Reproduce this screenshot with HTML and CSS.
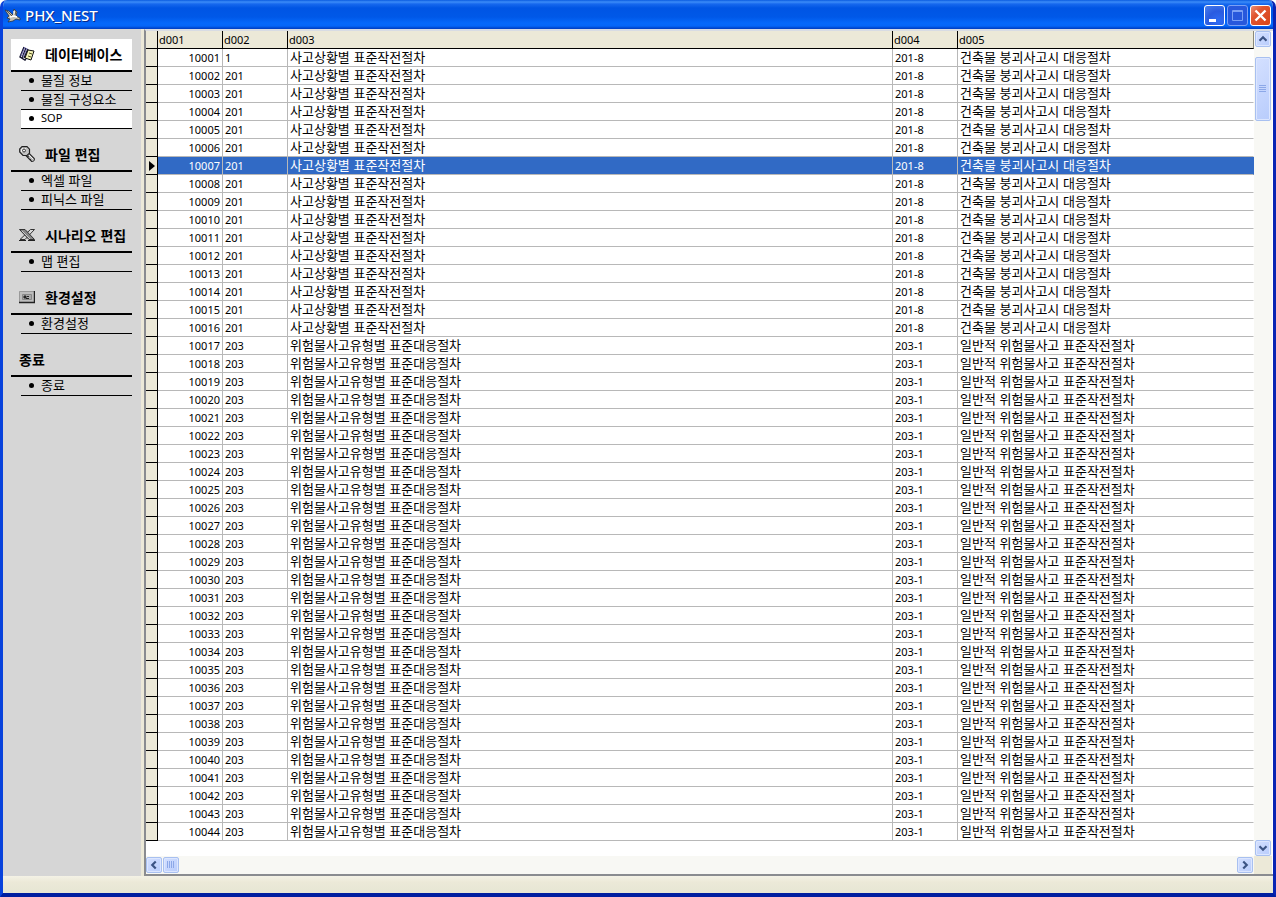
FILE: index.html
```html
<!DOCTYPE html>
<html lang="ko">
<head>
<meta charset="utf-8">
<title>PHX_NEST</title>
<link rel="stylesheet" href="styles.css">
</head>
<body>
<div class="window">
  <header class="titlebar">
    <svg class="app-icon" viewBox="0 0 16 16" aria-hidden="true">
      <path d="M0 3l4 1 4 4 1-6 3 3-1 4 4 2v2l-4-1-3 2-5 1 2-3-3-1 2-2z" fill="#c4c1b4" stroke="#2c3440" stroke-width=".8"/>
      <path d="M5 10l4-1 3 1M9 4v4" stroke="#fff" stroke-width="1.400" fill="none"/>
      <path d="M2 4l5 5M11 4l-1 4" stroke="#5c574a" fill="none"/>
    </svg>
    <h1 class="title">PHX_NEST</h1>
    <div class="window-buttons">
      <button class="win-btn" aria-label="최소화"><svg viewBox="0 0 21 21"><path d="M5 14h7v3H5z" fill="#fff"/></svg></button>
      <button class="win-btn win-btn-off" aria-label="최대화" disabled><svg viewBox="0 0 21 21"><path d="M5.500 5.500h10v10h-10zM5 6.500h11" fill="none" stroke="#7ba0f5"/></svg></button>
      <button class="win-btn win-btn-close" aria-label="닫기"><svg viewBox="0 0 21 21"><path d="M5.500 5.500l10 10M15.500 5.500l-10 10" stroke="#fff" stroke-width="2.400"/></svg></button>
    </div>
  </header>

  <div class="content">
    <nav class="sidebar">
      <section class="group">
        <h2 class="group-title group-title-active">
          <svg class="group-icon" viewBox="0 0 16 16" aria-hidden="true">
            <path d="M5 1L1 11l5 3 1-1M7 2L3 12M9 3L5 12" fill="none" stroke="#15152e" stroke-width="1.400"/>
            <path d="M6 1L2 10M8 2L4 11" stroke="#7470b4" fill="none"/>
            <path d="M9 4l6 1-3 9-6-2z" fill="#f4f2b4" stroke="#111"/>
            <path d="M10 7l3 1M9 10l3 1" stroke="#55551c"/>
          </svg>
          <span>데이터베이스</span>
        </h2>
        <ul class="items">
          <li><a class="item" href="#">물질 정보</a></li>
          <li><a class="item" href="#">물질 구성요소</a></li>
          <li><a class="item item-active item-latin" href="#" aria-current="page">SOP</a></li>
        </ul>
      </section>
      <section class="group">
        <h2 class="group-title">
          <svg class="group-icon" viewBox="0 0 16 16" aria-hidden="true">
            <path d="M8 8l7 7" stroke="#222" stroke-width="5"/>
            <path d="M8 8l6.500 6.500" stroke="#b4b4b4" stroke-width="2.600"/>
            <path d="M9 8l5 5" stroke="#f4f4f4"/>
            <path d="M8 11l2-1M11 14l1-1" stroke="#222"/>
            <path d="M3 .700h5l2.500 2.500v4L8 9.500H4L.700 6V3z" fill="#c4c4c4" stroke="#222" stroke-width="1.200"/>
            <path d="M3 3h4M3 3v3" stroke="#fff" stroke-width="1.500"/>
            <circle cx="5" cy="4.500" r="1.500" fill="#eee" stroke="#333"/>
          </svg>
          <span>파일 편집</span>
        </h2>
        <ul class="items">
          <li><a class="item" href="#">엑셀 파일</a></li>
          <li><a class="item" href="#">피닉스 파일</a></li>
        </ul>
      </section>
      <section class="group">
        <h2 class="group-title">
          <svg class="group-icon" viewBox="0 0 16 16" aria-hidden="true">
            <path d="M15.500 2.500h-4L1 12.500h5z" fill="#d8d8d8" stroke="#333"/>
            <path d="M.500 2.500H6l9.500 10H10z" fill="#888" stroke="#333"/>
            <path d="M3 4l8 8" stroke="#ccc"/>
            <path d="M0 13.500h7M9 13.500h7" stroke="#222"/>
          </svg>
          <span>시나리오 편집</span>
        </h2>
        <ul class="items">
          <li><a class="item" href="#">맵 편집</a></li>
        </ul>
      </section>
      <section class="group">
        <h2 class="group-title">
          <svg class="group-icon" viewBox="0 0 16 16" aria-hidden="true">
            <path d="M0 2h16v12H0z" fill="#bdbdbd"/>
            <path d="M.5 14V2.500H15" fill="none" stroke="#999"/>
            <path d="M15.500 2v11.500H0" fill="none" stroke="#222" stroke-width="1.400"/>
            <path d="M3.500 5.500h9v5h-9z" fill="#aaa" stroke="#888"/>
            <path d="M5 7h2v2H5zM8 7.500h2M7 9.500h3" fill="#222" stroke="#222"/>
          </svg>
          <span>환경설정</span>
        </h2>
        <ul class="items">
          <li><a class="item" href="#">환경설정</a></li>
        </ul>
      </section>
      <section class="group">
        <h2 class="group-title">종료</h2>
        <ul class="items">
          <li><a class="item" href="#">종료</a></li>
        </ul>
      </section>
    </nav>

    <main class="grid-panel">
      <div class="grid-view">
        <table class="grid">
          <colgroup>
            <col class="col-mark"><col class="col-code"><col class="col-code"><col class="col-name"><col class="col-code"><col class="col-desc">
          </colgroup>
          <thead>
            <tr><th class="mark"></th><th>d001</th><th>d002</th><th>d003</th><th>d004</th><th>d005</th></tr>
          </thead>
          <tbody id="rows"></tbody>
        </table>
      </div>
      <div class="vscroll">
        <button class="scroll-btn" aria-label="위로"><svg viewBox="0 0 16 16"><path d="M4 10l4-4 4 4"/></svg></button>
        <div class="thumb thumb-v"><svg viewBox="0 0 8 8"><path d="M0 .5h7M0 2.500h7M0 4.500h7M0 6.500h7"/></svg></div>
        <button class="scroll-btn scroll-end" aria-label="아래로"><svg viewBox="0 0 16 16"><path d="M4 6l4 4 4-4"/></svg></button>
      </div>
      <div class="hscroll">
        <button class="scroll-btn" aria-label="왼쪽으로"><svg viewBox="0 0 16 16"><path d="M10 4L6 8l4 4"/></svg></button>
        <div class="thumb thumb-h"><svg viewBox="0 0 8 8"><path d="M.5 0v7M2.500 0v7M4.500 0v7M6.500 0v7"/></svg></div>
        <button class="scroll-btn scroll-end" aria-label="오른쪽으로"><svg viewBox="0 0 16 16"><path d="M6 4l4 4-4 4"/></svg></button>
      </div>
      <div class="corner"></div>
    </main>
  </div>
  <footer class="statusbar"></footer>
</div>
<script src="rows.js"></script>
</body>
</html>
```
FILE: rows.js
```js
const groups = [
  { from: 10001, to: 10016, code: "201", name: "사고상황별 표준작전절차", sub: "201-8", desc: "건축물 붕괴사고시 대응절차" },
  { from: 10017, to: 10044, code: "203", name: "위험물사고유형별 표준대응절차", sub: "203-1", desc: "일반적 위험물사고 표준작전절차" }
];
const selectedId = 10007;
const body = document.getElementById("rows");

for (const g of groups) {
  for (let id = g.from; id <= g.to; id++) {
    const row = body.insertRow();
    if (id === selectedId) row.className = "selected";
    row.insertCell().className = "mark";
    const values = [
      [id, "num"],
      [id === 10001 ? "1" : g.code, ""],
      [g.name, "ko"],
      [g.sub, ""],
      [g.desc, "ko"]
    ];
    for (const [text, cls] of values) {
      const cell = row.insertCell();
      cell.textContent = text;
      if (cls) cell.className = cls;
    }
  }
}
```
FILE: styles.css
```css
* { box-sizing: border-box; }

body {
  margin: 0;
  background: #fff;
  color: #000;
  font: 11px "Noto Sans", "Noto Sans CJK KR", sans-serif;
}

button { padding: 0; font: inherit; }
svg { display: block; }

.window {
  height: 100vh;
  display: flex;
  flex-direction: column;
  border: solid #0831d9;
  border-width: 0 3px 4px;
  border-color: #0831d9 #0a24b4 #001ea0 #0842dc;
  border-radius: 7px 7px 0 0;
  overflow: hidden;
  background: #ece9d8;
}

.titlebar {
  flex: none;
  height: 29px;
  margin: 0 -3px;
  padding: 1px 5px 0;
  display: flex;
  align-items: center;
  gap: 4px;
  background: linear-gradient(#0a5be0 0, #3c8cf8 2px, #1668ee 4px, #0055e4 8px, #0058e8 17px, #0568fa 23px, #0566f8 26px, #0048d0 28px, #003cc0 29px);
}
.app-icon { width: 16px; height: 16px; }
.title {
  flex: 1;
  margin: 0;
  color: #fff;
  font: 500 15px/20px "Noto Sans", sans-serif;
  text-shadow: 1px 1px #0a2a88;
}
.window-buttons { display: flex; gap: 2px; }
.win-btn {
  width: 21px;
  height: 21px;
  border: 1px solid #fff;
  border-radius: 3px;
  background: radial-gradient(circle at 70% 80%, #2f6cf4, #2a5be0 50%, #4a80ec);
}
.win-btn svg { width: 21px; height: 21px; margin: -1px; }
.win-btn-off { border-color: #7ba0f5; background: #2858dc; }
.win-btn-close { background: linear-gradient(135deg, #ec9078, #e05530 35%, #d84418); }

.content { flex: 1; min-height: 0; display: flex; }

.sidebar {
  flex: none;
  width: 138px;
  padding: 10px 9px 0 8px;
  display: flex;
  flex-direction: column;
  gap: 10px;
  background: #d6d6d6;
}
.group-title {
  height: 33px;
  margin: 0;
  padding: 0 0 2px 8px;
  display: flex;
  align-items: center;
  gap: 10px;
  border-bottom: 2px solid #000;
  font: bold 14px/20px "Noto Sans CJK KR", sans-serif;
  white-space: nowrap;
}
.group-title-active { background: #fff; }
.group-icon { width: 16px; height: 16px; }
.items { margin: 0; padding: 0 0 0 10px; list-style: none; }
.item {
  height: 19px;
  padding: 0 0 2px 8px;
  display: flex;
  align-items: center;
  gap: 7px;
  border-bottom: 1px solid #000;
  color: #000;
  font: 13px/16px "Noto Sans CJK KR", sans-serif;
  text-decoration: none;
}
.item::before { content: ""; width: 5px; height: 5px; border-radius: 50%; background: #000; }
.item-latin { font: 11px/16px "Noto Sans", sans-serif; }
.item-active { background: #fff; }

.grid-panel {
  flex: 1;
  min-width: 0;
  margin-left: 3px;
  padding-right: 1px;
  display: grid;
  grid-template: 1fr 18px / 1fr 18px;
  border: 2px solid #8a8c90;
  border-top-color: #d8dce4;
  border-right: 0;
  background: #fff;
}
.grid-view { overflow: hidden; }

.grid {
  width: 100%;
  table-layout: fixed;
  border-collapse: separate;
  border-spacing: 0;
}
.col-mark { width: 12px; }
.col-code { width: 65px; }
.col-name { width: 605px; }
.grid th, .grid td {
  height: 18px;
  padding: 0 2px;
  border: solid #b8b8b8;
  border-width: 0 1px 1px 0;
  font-size: 11px;
  line-height: 17px;
  text-align: left;
  white-space: nowrap;
}
.grid th { font-weight: 400; padding: 0 1px; background: #ece9d8; border-color: #000; }
.grid .ko { font: 13px/15px "Noto Sans CJK KR", sans-serif; vertical-align: top; }
.grid .num { text-align: right; }
.grid .mark { padding: 0 0 0 3px; background: #ece9d8; border-color: #000; }
.grid td:last-child { border-right-color: #fff; }
.grid th:last-child { border-right-color: #8a8878; }
.selected td { background: #316ac5; color: #fff; }
.grid .selected td:last-child { border-right-color: #316ac5; }
.selected .mark::before {
  content: "";
  display: block;
  width: 0;
  border: solid transparent;
  border-width: 5px 0 5px 6px;
  border-left-color: #000;
}

.vscroll, .hscroll { display: flex; background: #f8f8f4; }
.vscroll { flex-direction: column; align-items: center; }
.hscroll { align-items: center; gap: 1px; }
.corner { background: #ece9d8; }
.scroll-btn, .thumb {
  flex: none;
  width: 16px;
  height: 16px;
  border: 1px solid #a8c0f0;
  border-radius: 2px;
  background: linear-gradient(135deg, #d4e0ff, #b8ccfc);
  box-shadow: inset 0 0 0 1px #dce6ff;
}
.scroll-btn svg { width: 14px; height: 14px; fill: none; stroke: #3c5484; stroke-width: 2.500; }
.scroll-end { margin: auto 0 0; }
.hscroll .scroll-end { margin: 0 1px 0 auto; }
.thumb { display: flex; align-items: center; justify-content: center; }
.thumb-v { height: 64px; margin-top: 10px; }
.thumb svg { width: 8px; height: 8px; stroke: #8ca8e8; }

.statusbar {
  flex: none;
  height: 17px;
  background: linear-gradient(#f4f2e6, #ece9d8 6px, #e6e6d4);
}
```
